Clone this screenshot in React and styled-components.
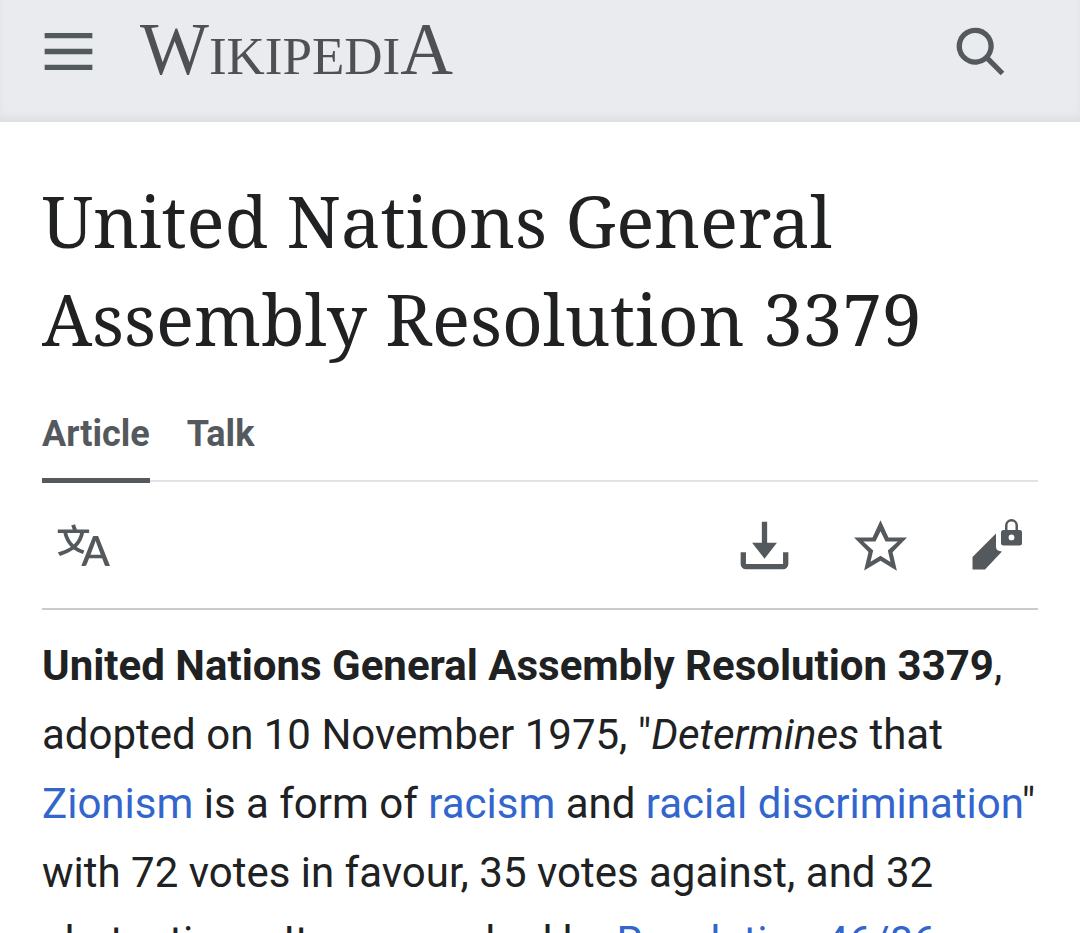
import React from 'react';
import styled, { createGlobalStyle } from 'styled-components';

const GlobalStyle = createGlobalStyle`
    * {
        box-sizing: border-box;
    }
    body {
        margin: 0;
        background: #fff;
        color: #202122;
        font-family: Roboto, "Liberation Sans", sans-serif;
    }
`;

const Page = styled.div`
    height: 100vh;
    overflow: hidden;
`;

const Header = styled.header`
    display: flex;
    align-items: flex-start;
    height: 122px;
    padding: 25px 73px 0 42px;
    background: #eaebef;
    box-shadow: inset 0 -6px 10px -2px rgba(0, 0, 0, 0.06);
`;

const IconButton = styled.button`
    display: flex;
    padding: 0;
    border: none;
    background: none;
    color: #54595d;
    cursor: pointer;
`;

const Icon = styled.svg`
    display: block;
    width: 53px;
    height: 53px;
    fill: currentColor;
`;

const Logo = styled.a`
    margin: 0 auto 0 45px;
    color: #4f5052;
    font-family: "Liberation Serif", serif;
    font-size: 53px;
    line-height: 49px;
    text-decoration: none;
`;

const LogoCap = styled.span`
    font-size: 73px;
`;

const Main = styled.main`
    padding: 0 42px;
`;

const Title = styled.h1`
    margin: 0;
    padding-top: 50px;
    font-family: "Noto Serif", "Liberation Serif", serif;
    font-size: 71px;
    font-weight: 400;
    line-height: 98px;
`;

const Tabs = styled.nav`
    display: flex;
    gap: 37px;
    height: 114px;
    border-bottom: 2px solid #dfe2e6;
`;

const Tab = styled.a`
    height: 115px;
    padding-top: 45px;
    border-bottom: ${({ $active }) => ($active ? '5px solid #54595d' : 'none')};
    color: #54595d;
    font-size: 36px;
    font-weight: 700;
    line-height: 42px;
    text-decoration: none;
`;

const Toolbar = styled.div`
    display: flex;
    align-items: center;
    gap: 63px;
    height: 128px;
    padding: 0 15px;
    border-bottom: 2px solid #c8ccd1;

    button:first-child {
        margin-right: auto;
    }
`;

const Lead = styled.p`
    margin: 0;
    padding-top: 21px;
    font-size: 42px;
    line-height: 69px;
`;

const Anchor = styled.a`
    color: #3366cc;
    text-decoration: none;
`;

const icons = {
    menu: 'M1 3v2h18V3zm0 8h18V9H1zm0 6h18v-2H1z',
    search: 'M12.2 13.6a7 7 0 1 1 1.4-1.4l5.4 5.4-1.4 1.4zM3 8a5 5 0 1 0 10 0A5 5 0 0 0 3 8',
    language: 'M20 18h-1.44a.6.6 0 0 1-.4-.12.8.8 0 0 1-.23-.31L17 15h-5l-1 2.54a.8.8 0 0 1-.22.3.6.6 0 0 1-.4.14H9l4.55-11.47h1.89zm-3.53-4.31L14.89 9.5a12 12 0 0 1-.39-1.24q-.09.37-.19.69l-.19.56-1.58 4.19zm-6.3-1.58a13.4 13.4 0 0 1-2.91-1.41 11.46 11.46 0 0 0 2.81-5.37H12V4H7.31a4 4 0 0 0-.2-.56C6.87 2.79 6.6 2 6.6 2l-1.47.5s.4.89.6 1.5H0v1.33h2.15A11.23 11.23 0 0 0 5 10.7a17.2 17.2 0 0 1-5 2.1q.56.82.87 1.38a23.3 23.3 0 0 0 5.22-2.51 15.6 15.6 0 0 0 3.56 1.77zM3.63 5.33h4.91a8.1 8.1 0 0 1-2.45 4.45 9.1 9.1 0 0 1-2.46-4.45',
    download: 'M17 12.500v4.500H3v-4.500H1V17a2 2 0 0 0 2 2h14a2 2 0 0 0 2-2v-4.500zM10 15l4.7-6H11V1H9v8H5.3z',
    star: 'M20 7h-7L10 .5 7 7H0l5.46 5.47-1.64 7 6.18-3.7 6.18 3.73-1.63-7zm-10 6.9-3.76 2.27 1-4.28L3.5 8.5h4.61L10 4.6l1.9 3.9h4.6l-3.73 3.4 1 4.28z',
};

function Glyph({ name }) {
    return (
        <Icon viewBox={name === 'language' ? '-0.3 0 20.3 20.3' : '0 0 20 20'} aria-hidden="true">
            <path fillRule="evenodd" d={icons[name]} />
        </Icon>
    );
}

function EditLock() {
    return (
        <Icon viewBox="0 0 53 53" aria-hidden="true">
            <path d="M2.500 50.500V38L26 14.500V28q0 4 6 4.500L15 50.500z" />
            <path
                fillRule="evenodd"
                d="M33.500 11H35V6.500a6.500 6.500 0 0 1 13 0V11h1.500a2.500 2.500 0 0 1 2.500 2.500v10.500a2.500 2.500 0 0 1-2.500 2.500h-16a2.500 2.500 0 0 1-2.500-2.500V13.500a2.500 2.500 0 0 1 2.500-2.500zM37.500 11h8V6.500a4 4 0 0 0-8 0zM41.500 15.500a2.900 2.900 0 1 0 0 5.800a2.900 2.900 0 1 0 0-5.800z"
            />
        </Icon>
    );
}

function App() {
    return (
        <Page>
            <GlobalStyle />
            <Header>
                <IconButton aria-label="Menu"><Glyph name="menu" /></IconButton>
                <Logo href="#">
                    <LogoCap>W</LogoCap>IKIPEDI<LogoCap>A</LogoCap>
                </Logo>
                <IconButton aria-label="Search"><Glyph name="search" /></IconButton>
            </Header>
            <Main>
                <Title>United Nations General Assembly Resolution 3379</Title>
                <Tabs>
                    <Tab href="#article" $active>Article</Tab>
                    <Tab href="#talk">Talk</Tab>
                </Tabs>
                <Toolbar>
                    <IconButton aria-label="Language"><Glyph name="language" /></IconButton>
                    <IconButton aria-label="Download"><Glyph name="download" /></IconButton>
                    <IconButton aria-label="Watch"><Glyph name="star" /></IconButton>
                    <IconButton aria-label="Edit"><EditLock /></IconButton>
                </Toolbar>
                <Lead>
                    <b>United Nations General Assembly Resolution 3379</b>, adopted on
                    10 November 1975, "<i>Determines</i> that <Anchor href="#zionism">Zionism</Anchor> is
                    a form of <Anchor href="#racism">racism</Anchor> and{' '}
                    <Anchor href="#discrimination">racial discrimination</Anchor>" with 72 votes in
                    favour, 35 votes against, and 32 abstentions. It was revoked
                    by <Anchor href="#resolution">Resolution 46/86</Anchor>
                </Lead>
            </Main>
        </Page>
    );
}

export default App;
